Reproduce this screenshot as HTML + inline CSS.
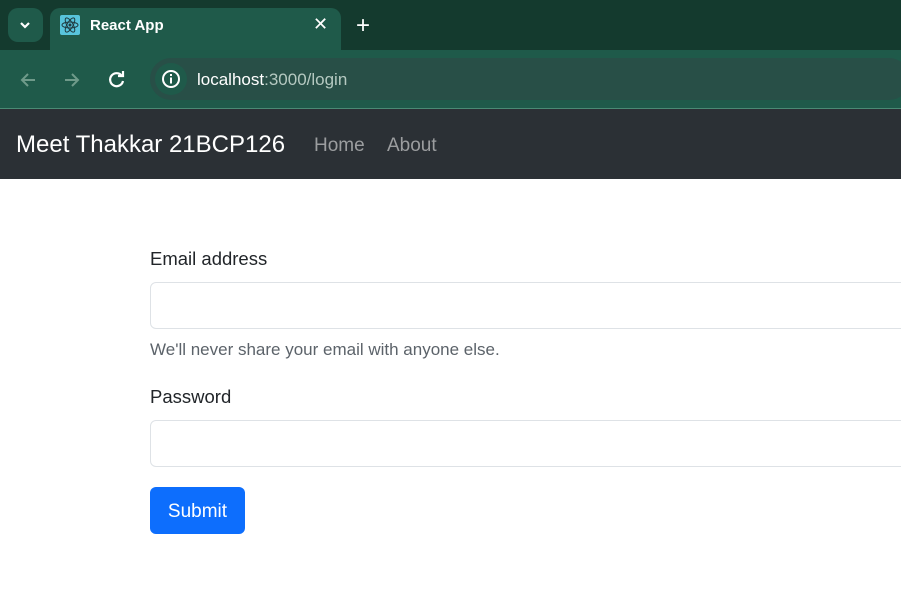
<!DOCTYPE html>
<html><head><style>
body{margin:0;width:901px;height:608px;overflow:hidden;background:#fff;font-family:"Liberation Sans",sans-serif;position:relative}
.a{position:absolute}
</style></head><body>
<div class="a" style="left:0;top:0;width:901px;height:50px;background:#143a2e"></div>
<div class="a" style="left:8px;top:8px;width:35px;height:34px;border-radius:10px;background:#1f5a4a"></div>
<svg class="a" style="left:18px;top:18px" width="14" height="14"><path d="M3 5l4 4 4-4" stroke="#fff" stroke-width="2.2" fill="none"/></svg>
<div class="a" style="left:50px;top:8px;width:291px;height:44px;border-radius:10px 10px 0 0;background:#1f5a4a"></div>
<div class="a" style="left:60px;top:15px;width:20px;height:20px;background:#58c4dc;border-radius:2px"></div>
<svg class="a" style="left:60px;top:15px" width="20" height="20"><g stroke="#1f3a40" fill="none" stroke-width="1"><ellipse cx="10" cy="10" rx="8" ry="3"/><ellipse cx="10" cy="10" rx="8" ry="3" transform="rotate(60 10 10)"/><ellipse cx="10" cy="10" rx="8" ry="3" transform="rotate(-60 10 10)"/></g><circle cx="10" cy="10" r="1.5" fill="#1f3a40"/></svg>
<div class="a" style="left:90px;top:17px;color:#fff;font-size:15px;font-weight:bold">React App</div>
<div class="a" style="left:313px;top:14px;color:#fff;font-size:18px">✕</div>
<div class="a" style="left:356px;top:12px;color:#fff;font-size:24px">+</div>
<div class="a" style="left:0;top:50px;width:901px;height:58px;background:#1f5a4a"></div>
<div class="a" style="left:0;top:108px;width:901px;height:1px;background:#4a8a74"></div>
<svg class="a" style="left:18px;top:70px" width="20" height="20"><path d="M17 10H4M10 4l-6 6 6 6" stroke="#6f9a8a" stroke-width="2" fill="none"/></svg>
<svg class="a" style="left:62px;top:70px" width="20" height="20"><path d="M3 10h13M10 4l6 6-6 6" stroke="#6f9a8a" stroke-width="2" fill="none"/></svg>
<svg class="a" style="left:107px;top:69px" width="20" height="20"><path d="M15 7A6.5 6.5 0 1 0 16 12" stroke="#fff" stroke-width="2.2" fill="none"/><path d="M11 7h5V2" stroke="#fff" stroke-width="2.2" fill="none"/></svg>
<div class="a" style="left:150px;top:58px;width:760px;height:42px;border-radius:21px;background:#284f47"></div>
<div class="a" style="left:155px;top:63px;width:32px;height:32px;border-radius:16px;background:#1f5a4a"></div>
<svg class="a" style="left:161px;top:69px" width="20" height="20"><circle cx="10" cy="10" r="8" stroke="#fff" stroke-width="2" fill="none"/><rect x="9" y="8.5" width="2" height="6" fill="#fff"/><rect x="9" y="5" width="2" height="2" fill="#fff"/></svg>
<div class="a" style="left:197px;top:70px;color:#fff;font-size:17px">localhost<span style="color:#b5c9c1">:3000/login</span></div>
<div class="a" style="left:0;top:109px;width:901px;height:70px;background:#2b3035"></div>
<div class="a" style="left:16px;top:131px;color:#fff;font-size:24px">Meet Thakkar 21BCP126</div>
<div class="a" style="left:314px;top:135px;color:#9b9d9f;font-size:19px">Home</div>
<div class="a" style="left:387px;top:135px;color:#9b9d9f;font-size:19px">About</div>
<div class="a" style="left:150px;top:248px;color:#212529;font-size:18.5px">Email address</div>
<div class="a" style="left:150px;top:282px;width:780px;height:45px;border:1px solid #dee2e6;border-radius:6px"></div>
<div class="a" style="left:150px;top:340px;color:#5c636a;font-size:17px">We'll never share your email with anyone else.</div>
<div class="a" style="left:150px;top:386px;color:#212529;font-size:18.5px">Password</div>
<div class="a" style="left:150px;top:420px;width:780px;height:45px;border:1px solid #dee2e6;border-radius:6px"></div>
<div class="a" style="left:150px;top:487px;width:95px;height:47px;background:#0d6efd;border-radius:6px;color:#fff;font-size:19px;text-align:center;line-height:49px">Submit</div>
</body></html>
